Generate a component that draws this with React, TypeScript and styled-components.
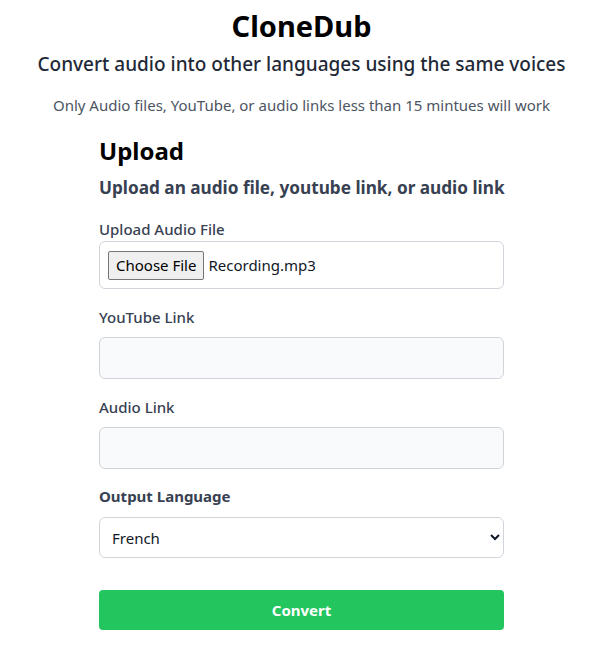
import React from "react";
import styled, { createGlobalStyle } from "styled-components";

const Global = createGlobalStyle`
  html, body { margin: 0; padding: 0; background: #ffffff; }
  body { font-family: "Noto Sans", "Open Sans", Arial, sans-serif; color: #000; }
  * { box-sizing: border-box; }
`;

const Page = styled.main`
  display: flex;
  flex-direction: column;
  align-items: center;
  padding-top: 8px;
  padding-right: 1px;
`;

const Title = styled.h1`
  margin: 0;
  font-size: 29px;
  line-height: 36px;
  font-weight: 700;
`;

const Subtitle = styled.h2`
  margin: 6px 0 0;
  font-size: 19px;
  line-height: 28px;
  font-weight: 500;
  color: #1f2937;
`;

const Note = styled.p`
  margin: 15px 0 0;
  font-size: 15px;
  line-height: 24px;
  color: #4b5563;
`;

const Form = styled.form`
  width: 405px;
  margin-top: 18px;
  display: flex;
  flex-direction: column;
`;

const Heading = styled.h3`
  margin: 0;
  font-size: 24px;
  line-height: 32px;
  font-weight: 700;
`;

const SubHeading = styled.h4`
  margin: 7px 0 0;
  font-size: 17.2px;
  line-height: 28px;
  font-weight: 700;
  color: #374151;
  white-space: nowrap;
`;

const Field = styled.div<{ $gap: number }>`
  display: flex;
  flex-direction: column;
  margin-top: ${(p) => p.$gap}px;
`;

const Label = styled.label<{ $bold?: boolean; $space: number }>`
  font-size: 15px;
  line-height: 24px;
  font-weight: ${(p) => (p.$bold ? 700 : 500)};
  color: #374151;
  margin-bottom: ${(p) => p.$space}px;
`;

const FileBox = styled.div`
  display: flex;
  align-items: center;
  height: 48px;
  padding: 0 8px;
  border: 1px solid #d1d5db;
  border-radius: 6px;
  background: #ffffff;
  font-size: 15px;
  color: #111827;
`;

const ChooseButton = styled.button`
  height: 29px;
  padding: 0 7px;
  margin-right: 4px;
  font-family: inherit;
  font-size: 15px;
  color: #000;
  background: #efefef;
  border: 1px solid #767676;
  border-radius: 2px;
`;

const TextInput = styled.input`
  height: 42px;
  width: 100%;
  border: 1px solid #d1d5db;
  border-radius: 6px;
  background: #f9fafb;
  padding: 0 12px;
  font-family: inherit;
  font-size: 15px;
  outline: none;
`;

const Select = styled.select`
  height: 41px;
  width: 100%;
  border: 1px solid #d1d5db;
  border-radius: 6px;
  background: #ffffff;
  padding: 0 8px;
  font-family: inherit;
  font-size: 15px;
  color: #111827;
  outline: none;
`;

const Submit = styled.button`
  margin-top: 32px;
  height: 40px;
  width: 100%;
  border: none;
  border-radius: 4px;
  background: #22c55e;
  color: #ffffff;
  font-family: inherit;
  font-size: 15px;
  font-weight: 700;
`;

export default function App() {
  return (
    <>
      <Global />
      <Page>
        <Title>CloneDub</Title>
        <Subtitle>Convert audio into other languages using the same voices</Subtitle>
        <Note>Only Audio files, YouTube, or audio links less than 15 mintues will work</Note>
        <Form onSubmit={(e) => e.preventDefault()}>
          <Heading>Upload</Heading>
          <SubHeading>Upload an audio file, youtube link, or audio link</SubHeading>
          <Field $gap={15}>
            <Label $space={0}>Upload Audio File</Label>
            <FileBox>
              <ChooseButton type="button">Choose File</ChooseButton>
              <span>Recording.mp3</span>
            </FileBox>
          </Field>
          <Field $gap={16}>
            <Label $space={8}>YouTube Link</Label>
            <TextInput type="text" />
          </Field>
          <Field $gap={16}>
            <Label $space={8}>Audio Link</Label>
            <TextInput type="text" />
          </Field>
          <Field $gap={15}>
            <Label $bold $space={9}>Output Language</Label>
            <Select defaultValue="French">
              <option>English</option>
              <option>French</option>
              <option>Spanish</option>
              <option>German</option>
            </Select>
          </Field>
          <Submit type="submit">Convert</Submit>
        </Form>
      </Page>
    </>
  );
}
